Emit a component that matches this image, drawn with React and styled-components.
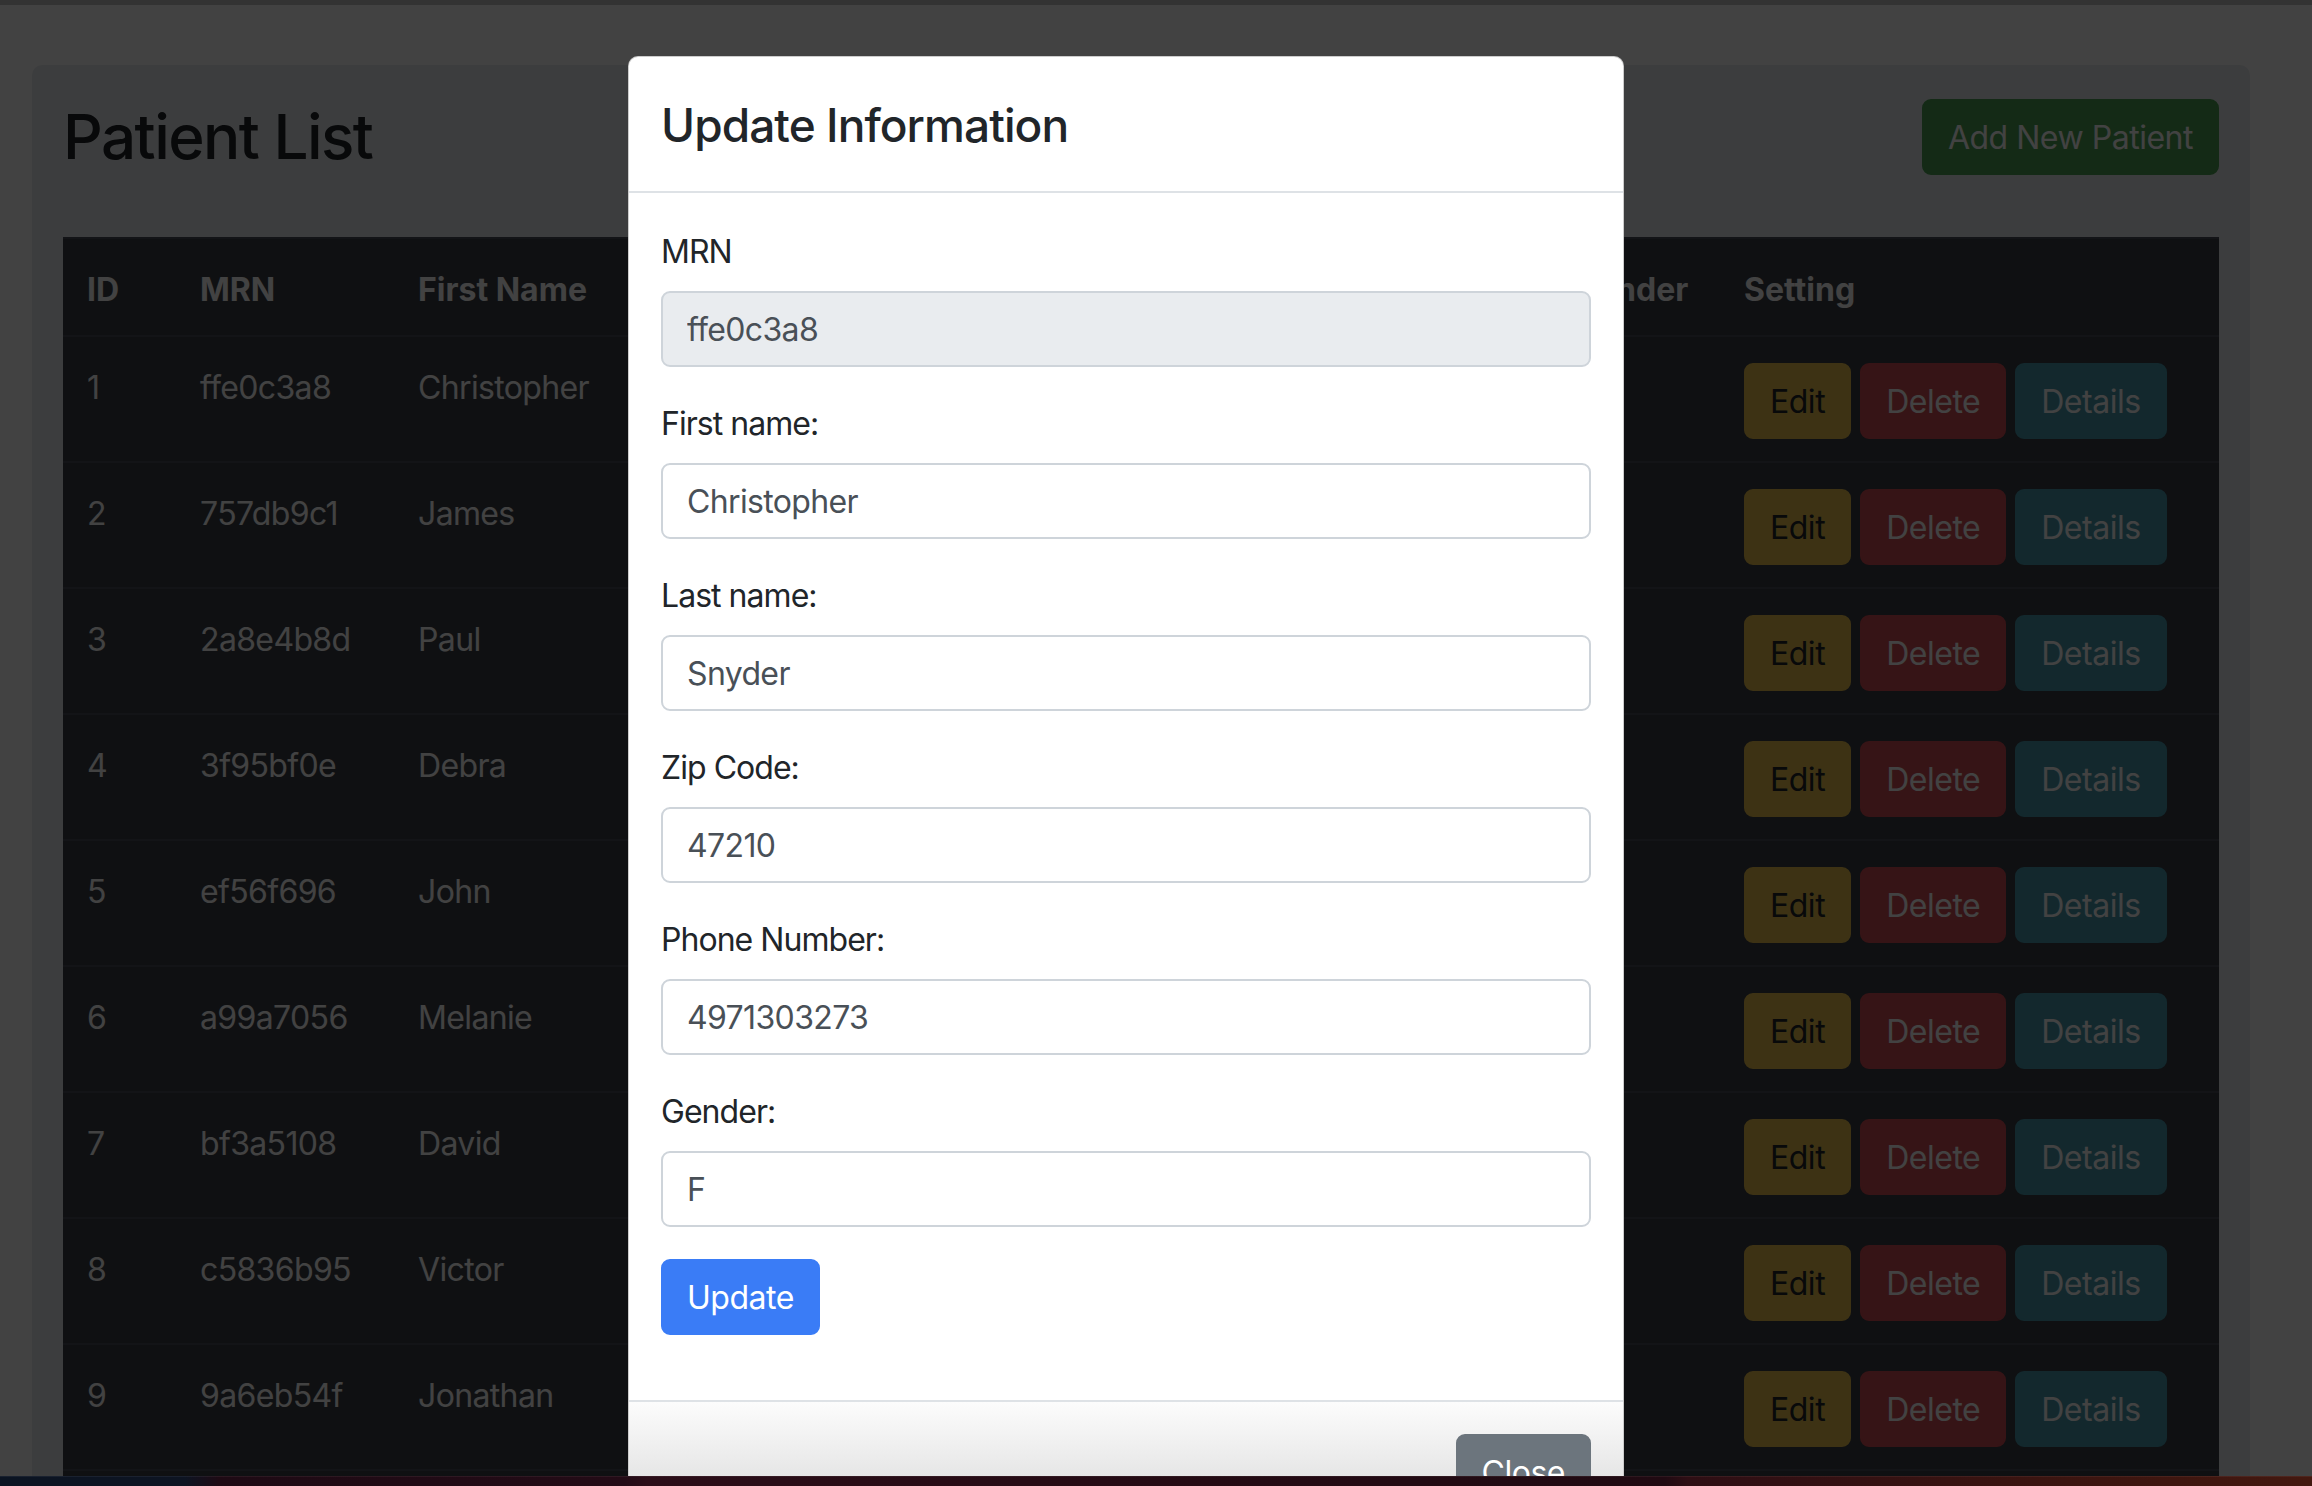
import React from "react";
import styled, { createGlobalStyle } from "styled-components";

const GlobalStyle = createGlobalStyle`
  html, body { margin: 0; padding: 0; background: #ffffff; }
  body { font-family: Inter, "Noto Sans", "Liberation Sans", sans-serif; color: #212529; }
  * { box-sizing: border-box; }
`;

const Screen = styled.div`
  position: relative;
  width: 2312px;
  height: 1486px;
  overflow: hidden;
  background: #ffffff;
`;

const Jumbotron = styled.section`
  margin: 65px 62px 0 32px;
  padding: 34px 31px;
  background: #e9ecef;
  border-radius: 10px;
`;

const HeaderRow = styled.div`
  display: flex;
  align-items: center;
  justify-content: space-between;
  margin-bottom: 62px;
`;

const Title = styled.h1`
  margin: 0;
  font-size: 62px;
  line-height: 1.2;
  font-weight: 500;
  letter-spacing: -0.025em;
  color: #212529;
`;

const Btn = styled.button`
  display: inline-flex;
  align-items: center;
  justify-content: center;
  height: 76px;
  padding: 2px 24px 0;
  border: 2px solid ${(p) => p.$bg};
  border-radius: 9px;
  background: ${(p) => p.$bg};
  color: ${(p) => p.$fg || "#ffffff"};
  font-family: inherit;
  font-size: 32px;
  line-height: 48px;
  font-weight: 400;
  letter-spacing: -0.015em;
  cursor: pointer;
`;

const Table = styled.table`
  width: 100%;
  table-layout: fixed;
  border-collapse: collapse;
  background: #3a3e45;
  color: #ffffff;
  font-size: 32px;
  line-height: 48px;
`;

const Th = styled.th`
  text-align: left;
  font-weight: 700;
  padding: 27px 24px 21px;
  border-top: 2px solid #4a5058;
  border-bottom: 2px solid #4a5058;
  white-space: nowrap;
  overflow: hidden;
`;

const Td = styled.td`
  vertical-align: top;
  padding: 27px 24px 21px;
  border-top: 2px solid #4a5058;
  white-space: nowrap;
  letter-spacing: -0.02em;
`;

const Actions = styled.div`
  display: flex;
  gap: 9px;
  margin-top: -1px;
  margin-bottom: 1px;
`;

const Backdrop = styled.div`
  position: absolute;
  inset: 0;
  background: rgba(0, 0, 0, 0.74);
`;

const TopEdge = styled.div`
  position: absolute;
  top: 0;
  left: 0;
  right: 0;
  height: 5px;
  background: rgba(0, 0, 0, 0.22);
`;

const ModalLayer = styled.div`
  position: absolute;
  inset: 0;
  padding: 56px 60px 0 0;
  display: flex;
  justify-content: center;
  align-items: flex-start;
`;

const Modal = styled.div`
  width: 996px;
  background: #ffffff;
  border: 1px solid rgba(0, 0, 0, 0.2);
  border-radius: 10px;
  overflow: hidden;
`;

const ModalHeader = styled.div`
  padding: 32px 32px 30px;
  border-bottom: 2px solid #dee2e6;
`;

const ModalTitle = styled.h4`
  margin: 0;
  font-size: 46px;
  line-height: 72px;
  font-weight: 500;
  letter-spacing: -0.02em;
  color: #212529;
`;

const ModalBody = styled.div`
  padding: 34px 32px 33px;
`;

const FormGroup = styled.div`
  margin-bottom: 32px;
`;

const Label = styled.label`
  display: block;
  margin-bottom: 15px;
  padding-top: 1px;
  font-size: 32px;
  line-height: 48px;
  letter-spacing: -0.03em;
  color: #212529;
`;

const Input = styled.input`
  display: block;
  width: 100%;
  height: 76px;
  padding: 0 24px;
  border: 2px solid #ced4da;
  border-radius: 9px;
  background: ${(p) => (p.readOnly ? "#e9ecef" : "#ffffff")};
  color: #495057;
  font-family: inherit;
  font-size: 32px;
  letter-spacing: -0.02em;
  outline: none;
`;

const ModalFooter = styled.div`
  display: flex;
  justify-content: flex-end;
  padding: 32px 32px 40px;
  border-top: 2px solid #dee2e6;
  background: linear-gradient(180deg, #fcfcfc 0px, #e5e5e5 78px, #e5e5e5 100%);
`;

const DesktopStrip = styled.div`
  position: absolute;
  left: 0;
  right: 0;
  bottom: 0;
  height: 10px;
  border-top: 1px solid rgba(255, 255, 255, 0.06);
  background: linear-gradient(
    90deg,
    #0b1422 0%,
    #0d1422 8%,
    #1e0a14 9.5%,
    #230b16 27%,
    #2b0d18 28%,
    #250b14 50%,
    #200a12 72%,
    #2e0e14 73%,
    #3a1410 88%,
    #43180f 100%
  );
`;

const columns = [
  { label: "ID", width: 113 },
  { label: "MRN", width: 218 },
  { label: "First Name", width: 300 },
  { label: "Last Name", width: 280 },
  { label: "Zip Code", width: 220 },
  { label: "Phone Number", width: 355 },
  { label: "Gender", width: 171 },
  { label: "Setting", width: 499 },
];

const patients = [
  [1, "ffe0c3a8", "Christopher", "Snyder", "47210", "4971303273", "F"],
  [2, "757db9c1", "James", "Walker", "30301", "4045550182", "M"],
  [3, "2a8e4b8d", "Paul", "Reed", "60614", "3125550147", "M"],
  [4, "3f95bf0e", "Debra", "Hughes", "94110", "4155550123", "F"],
  [5, "ef56f696", "John", "Carter", "10001", "2125550199", "M"],
  [6, "a99a7056", "Melanie", "Brooks", "73301", "5125550164", "F"],
  [7, "bf3a5108", "David", "Morgan", "98101", "2065550118", "M"],
  [8, "c5836b95", "Victor", "Ramos", "33101", "3055550177", "M"],
  [9, "9a6eb54f", "Jonathan", "Price", "80202", "3035550135", "M"],
  [10, "6d1e2f0a", "Karen", "Ellis", "02108", "6175550190", "F"],
];

const fields = [
  { label: "MRN", value: "ffe0c3a8", readOnly: true },
  { label: "First name:", value: "Christopher" },
  { label: "Last name:", value: "Snyder" },
  { label: "Zip Code:", value: "47210" },
  { label: "Phone Number:", value: "4971303273" },
  { label: "Gender:", value: "F" },
];

export default function App() {
  return (
    <>
      <GlobalStyle />
      <Screen>
        <Jumbotron>
          <HeaderRow>
            <Title>Patient List</Title>
            <Btn $bg="#4da255">Add New Patient</Btn>
          </HeaderRow>
          <Table>
            <colgroup>
              {columns.map((c) => (
                <col key={c.label} style={{ width: c.width }} />
              ))}
            </colgroup>
            <thead>
              <tr>
                {columns.map((c) => (
                  <Th key={c.label}>{c.label}</Th>
                ))}
              </tr>
            </thead>
            <tbody>
              {patients.map((p) => (
                <tr key={p[0]}>
                  {p.map((v, i) => (
                    <Td key={i}>{v}</Td>
                  ))}
                  <Td>
                    <Actions>
                      <Btn $bg="#ebc24f" $fg="#212529">Edit</Btn>
                      <Btn $bg="#d04d55">Delete</Btn>
                      <Btn $bg="#499aad">Details</Btn>
                    </Actions>
                  </Td>
                </tr>
              ))}
            </tbody>
          </Table>
        </Jumbotron>

        <Backdrop />
        <TopEdge />

        <ModalLayer>
          <Modal>
            <ModalHeader>
              <ModalTitle>Update Information</ModalTitle>
            </ModalHeader>
            <ModalBody>
              {fields.map((f) => (
                <FormGroup key={f.label}>
                  <Label>{f.label}</Label>
                  <Input defaultValue={f.value} readOnly={f.readOnly} />
                </FormGroup>
              ))}
              <FormGroup>
                <Btn $bg="#3a7cf6">Update</Btn>
              </FormGroup>
            </ModalBody>
            <ModalFooter>
              <Btn $bg="#6c757d">Close</Btn>
            </ModalFooter>
          </Modal>
        </ModalLayer>

        <DesktopStrip />
      </Screen>
    </>
  );
}
